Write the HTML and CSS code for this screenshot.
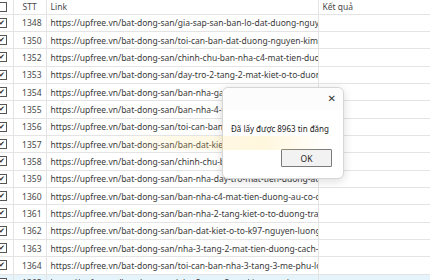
FILE: index.html
```
<!DOCTYPE html>
<html lang="vi">
<head>
    <meta charset="UTF-8">
    <title>Lấy tin đăng</title>
    <link rel="stylesheet" href="styles.css">
</head>
<body>
    <div class="grid-wrap">
        <table class="grid">
            <colgroup>
                <col class="col-check">
                <col class="col-stt">
                <col class="col-link">
                <col class="col-result">
            </colgroup>
            <thead>
                <tr>
                    <th><span class="box"></span></th>
                    <th class="stt-head">STT</th>
                    <th>Link</th>
                    <th>Kết quả</th>
                </tr>
            </thead>
            <tbody id="rows"></tbody>
        </table>

        <!-- faint watermark smear -->
        <div class="smear"></div>

        <!-- Message box -->
        <div class="msgbox">
            <div class="msgbox-title"><span class="close">&#x2715;</span></div>
            <div class="msgbox-body">Đã lấy được 8963 tin đăng</div>
            <div class="msgbox-foot"><button class="ok-btn">OK</button></div>
        </div>
    </div>

    <script>
        const base = 'https://upfree.vn/bat-dong-san/';
        const data = [
            [1348, 'gia-sap-san-ban-lo-dat-duong-nguyen-luong-bang'],
            [1350, 'toi-can-ban-dat-duong-nguyen-kim-hoa'],
            [1352, 'chinh-chu-ban-nha-c4-mat-tien-duong-au-co'],
            [1353, 'day-tro-2-tang-2-mat-kiet-o-to-duong-au-co'],
            [1354, 'ban-nha-gac-lung-kiet-o-to'],
            [1355, 'ban-nha-4-tang-mat-tien-duong'],
            [1356, 'toi-can-ban-nha-kiet-o-to'],
            [1357, 'ban-dat-kiet-o-to-duong-au-co'],
            [1358, 'chinh-chu-ban-nha-kiet-o-to'],
            [1359, 'ban-nha-day-tro-mat-tien-duong-au-co-co-7'],
            [1360, 'ban-nha-c4-mat-tien-duong-au-co-co-7-phong'],
            [1361, 'ban-nha-2-tang-kiet-o-to-duong-tran-dinh-tri'],
            [1362, 'ban-dat-kiet-o-to-k97-nguyen-luong-bang'],
            [1363, 'nha-3-tang-2-mat-tien-duong-cach-mang-thang-8'],
            [1364, 'toi-can-ban-nha-3-tang-3-me-phu-loc-1'],
            [1365, 'nha-2-tang-2-me-kiet-o-to-duong-truong-chinh']
        ];
        const tbody = document.getElementById('rows');
        data.forEach(([stt, slug], i) => {
            const tr = document.createElement('tr');
            if (i === data.length - 1) tr.className = 'selected';
            tr.innerHTML =
                '<td><span class="box checked">&#x2714;</span></td>' +
                '<td class="stt">' + stt + '</td>' +
                '<td class="link">' + base + slug + '</td>' +
                '<td></td>';
            tbody.appendChild(tr);
        });
    </script>
</body>
</html>
```

FILE: styles.css
```
* {
    margin: 0;
    padding: 0;
    box-sizing: border-box;
}

body {
    background: #fff;
    font-family: "Noto Sans", "Open Sans", sans-serif;
    font-size: 8.5px;
    color: #3a3a3a;
    overflow: hidden;
}

.grid-wrap {
    position: relative;
    width: 430px;
    height: 280px;
    overflow: hidden;
}

.grid {
    width: 430px;
    border-collapse: collapse;
    table-layout: fixed;
}

.col-check { width: 13px; }
.col-stt { width: 33px; }
.col-link { width: 272px; }
.col-result { width: 112px; }

.grid th {
    height: 14px;
    font-weight: normal;
    text-align: left;
    padding: 0 4px;
    color: #4a4a4a;
    border-right: 1px solid #e4e4e4;
    border-bottom: 1px solid #e4e4e4;
    white-space: nowrap;
    overflow: hidden;
}

.grid th.stt-head {
    padding-left: 9px;
}

.grid td {
    height: 17.35px;
    padding: 0 4px;
    border-right: 1px solid #e4e4e4;
    border-bottom: 1px solid #e4e4e4;
    white-space: nowrap;
    overflow: hidden;
}

.grid th:first-child,
.grid td:first-child {
    padding: 0;
    overflow: visible;
}

.grid td.stt {
    text-align: right;
    padding-right: 4px;
    color: #4a4a4a;
}

.grid td.link {
    text-overflow: clip;
}

.grid tr.selected td {
    background: #e5f3fb;
    border-bottom-color: #cde8f7;
}

.box {
    display: block;
    width: 10px;
    height: 10px;
    margin-left: -3px;
    border: 1px solid #555;
    background: #fff;
    font-size: 7px;
    line-height: 8px;
    text-align: center;
    color: #222;
}

.smear {
    position: absolute;
    left: 110px;
    top: 136px;
    width: 220px;
    height: 14px;
    background: linear-gradient(90deg, rgba(255, 220, 120, 0), rgba(255, 220, 120, 0.18) 30%, rgba(255, 220, 120, 0.25) 70%, rgba(255, 220, 120, 0));
    pointer-events: none;
    z-index: 2;
}

.msgbox {
    position: absolute;
    left: 222px;
    top: 87px;
    width: 122px;
    height: 92px;
    background: #fff;
    border: 1px solid #d6d6d6;
    border-radius: 6px;
    box-shadow: 0 2px 10px rgba(0, 0, 0, 0.15);
    display: flex;
    flex-direction: column;
    z-index: 1;
}

.msgbox-title {
    height: 22px;
    display: flex;
    justify-content: flex-end;
    align-items: center;
    padding: 0 7px 0 0;
    background: #fcfcfd;
    border-radius: 6px 6px 0 0;
}

.close {
    font-family: "DejaVu Sans", sans-serif;
    font-size: 10px;
    color: #333;
    margin-top: -2px;
}

.msgbox-body {
    flex: 1;
    padding: 13px 0 0 8px;
    font-size: 8px;
    color: #222;
}

.msgbox-foot {
    display: flex;
    justify-content: flex-end;
    padding: 0 11px 11px 0;
}

.ok-btn {
    width: 51px;
    height: 18px;
    font-family: "Noto Sans", sans-serif;
    font-size: 8.5px;
    color: #222;
    background: #f2f2f2;
    border: 1px solid #7a7a7a;
    border-radius: 1px;
}
```
